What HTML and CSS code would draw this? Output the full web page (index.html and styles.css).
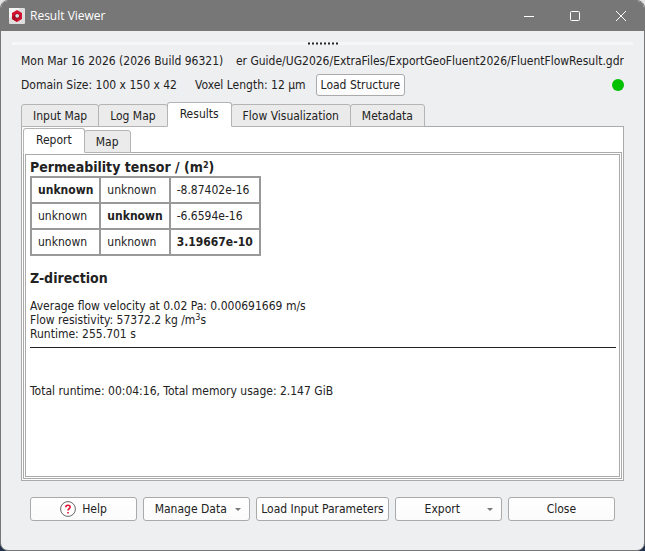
FILE: index.html
```html
<!DOCTYPE html>
<html lang="en">
<head>
<meta charset="utf-8">
<title>Result Viewer</title>
<link rel="stylesheet" href="styles.css">
</head>
<body>
<div class="window">
  <header class="titlebar">
    <svg class="app-icon" viewBox="0 0 16 16" aria-hidden="true">
      <rect width="16" height="16" rx="1" fill="#dedede"/>
      <path d="M0 0H11L0 11Z" fill="#f4f4f4"/>
      <path d="M8 2 13 5V11L8 14 3 11V5Z" fill="#d2122e"/>
      <path d="M3 8 8 8 8 14 3 11Z" fill="#b50d26"/>
      <circle cx="8" cy="8" r="2.6" fill="#8b1020"/>
      <circle cx="8.2" cy="7.8" r="1.9" fill="#d9e3e4"/>
    </svg>
    <h1 class="title">Result Viewer</h1>
    <div class="window-controls">
      <button class="window-control" type="button" aria-label="Minimize"><svg viewBox="0 0 12 12"><path d="M1 6.5H11"/></svg></button>
      <button class="window-control" type="button" aria-label="Maximize"><svg viewBox="0 0 12 12"><rect x="1.5" y="1.5" width="9" height="9" rx="1"/></svg></button>
      <button class="window-control" type="button" aria-label="Close window"><svg viewBox="0 0 12 12"><path d="M1 1 11 11M11 1 1 11"/></svg></button>
    </div>
  </header>
  <div class="splitter">
    <svg class="grip" viewBox="0 0 32 3" aria-hidden="true"><path d="M1 1.5H32" stroke="#222" stroke-width="2" stroke-dasharray="2 2"/></svg>
  </div>
  <main class="content">
    <div class="info-row">
      <span class="build">Mon Mar 16 2026 (2026 Build 96321)</span>
      <span class="path">er Guide/UG2026/ExtraFiles/ExportGeoFluent2026/FluentFlowResult.gdr</span>
    </div>
    <div class="domain-row">
      <span class="domain">Domain Size: 100 x 150 x 42</span>
      <span class="voxel">Voxel Length: 12 µm</span>
      <button class="button button-small" type="button">Load Structure</button>
      <span class="status" role="img" aria-label="Ready"></span>
    </div>
    <div class="tabs tabs-main" role="tablist">
      <button class="tab" role="tab" type="button">Input Map</button>
      <button class="tab" role="tab" type="button">Log Map</button>
      <button class="tab tab-active" role="tab" type="button" aria-selected="true">Results</button>
      <button class="tab" role="tab" type="button">Flow Visualization</button>
      <button class="tab" role="tab" type="button">Metadata</button>
    </div>
    <section class="pane">
      <div class="tabs" role="tablist">
        <button class="tab tab-active" role="tab" type="button" aria-selected="true">Report</button>
        <button class="tab" role="tab" type="button">Map</button>
      </div>
      <div class="inner-pane">
        <article class="report">
          <h2 class="heading">Permeability tensor / (m<sup>2</sup>)</h2>
          <table class="tensor">
            <tr><td><b>unknown</b></td><td>unknown</td><td>-8.87402e-16</td></tr>
            <tr><td>unknown</td><td><b>unknown</b></td><td>-6.6594e-16</td></tr>
            <tr><td>unknown</td><td>unknown</td><td><b>3.19667e-10</b></td></tr>
          </table>
          <h2 class="heading direction">Z-direction</h2>
          <p class="facts">Average flow velocity at 0.02 Pa: 0.000691669 m/s<br>Flow resistivity: 57372.2 kg /m<sup>3</sup>s<br>Runtime: 255.701 s</p>
          <hr class="rule">
          <p class="total">Total runtime: 00:04:16, Total memory usage: 2.147 GiB</p>
        </article>
      </div>
    </section>
    <footer class="actions">
      <button class="button" type="button"><svg class="help-icon" viewBox="0 0 16 16" aria-hidden="true"><circle cx="8" cy="8" r="7.4" fill="#fff" stroke="#666"/><path d="M5.8 6.2C5.8 3.6 10.2 3.6 10.2 6.1 10.2 7.6 8 7.8 8 9.6M8 11V12.6" fill="none" stroke="#e01030" stroke-width="1.6"/></svg>Help</button>
      <button class="button button-menu" type="button">Manage Data</button>
      <button class="button" type="button">Load Input Parameters</button>
      <button class="button button-menu" type="button">Export</button>
      <button class="button" type="button">Close</button>
    </footer>
  </main>
</div>
</body>
</html>
```
FILE: styles.css
```css
* { box-sizing: border-box; }

body {
  margin: 0;
  background: linear-gradient(#e4e4e4 50%, #20304c 50%);
  color: #222;
  font: 12px/14px "DejaVu Sans Condensed", "DejaVu Sans", sans-serif;
}

button {
  margin: 0;
  color: inherit;
  font: inherit;
  white-space: nowrap;
}

.window {
  display: flex;
  flex-direction: column;
  min-height: 100vh;
  overflow: hidden;
  border: 1px solid #777;
  border-radius: 8px;
  background: #eeeff1;
}

.titlebar {
  display: flex;
  align-items: center;
  height: 30px;
  padding-left: 8px;
  background: #777;
  color: #fff;
}

.app-icon { width: 16px; height: 16px; }

.title {
  margin: 0 0 0 5px;
  font: 12px/16px "Open Sans", sans-serif;
}

.window-controls { display: flex; margin-left: auto; }

.window-control {
  display: flex;
  align-items: center;
  justify-content: center;
  width: 46px;
  height: 30px;
  padding: 0;
  border: 0;
  background: none;
}

.window-control svg {
  width: 12px;
  height: 12px;
  fill: none;
  stroke: #fff;
}

.splitter {
  display: flex;
  justify-content: center;
  margin: 11px 11px 0;
  height: 3px;
  background: #f7f7f7;
}

.grip { width: 32px; height: 3px; }

.content {
  display: flex;
  flex: 1;
  flex-direction: column;
  padding: 9px 20px 29px;
}

.info-row { display: flex; gap: 4px; }

.build { white-space: nowrap; }

.path {
  display: flex;
  flex: 1;
  justify-content: flex-end;
  min-width: 0;
  overflow: hidden;
  white-space: nowrap;
}

.domain-row {
  display: flex;
  align-items: center;
  margin-top: 6px;
}

.voxel { margin: 0 10px 0 18px; }

.status {
  width: 12px;
  height: 12px;
  margin-left: auto;
  border-radius: 50%;
  background: #00c000;
}

.button {
  height: 24px;
  padding: 0 4px;
  border: 1px solid #aaa;
  border-radius: 3px;
  background: linear-gradient(#fff, #fbfbfb);
}

.button-small { height: 22px; }

.tabs {
  display: flex;
  align-items: flex-end;
  position: relative;
  height: 25px;
  margin-bottom: -1px;
}

.tab {
  height: 23px;
  margin-right: -1px;
  padding: 1px 11px 0;
  border: 1px solid #b4b4b4;
  border-radius: 3px 3px 0 0;
  background: #ebebeb;
}

.tab-active {
  z-index: 1;
  height: 25px;
  padding: 0 12px 1px;
  border-bottom-color: #fff;
  background: #fff;
}

.tabs-main { margin-top: 6px; }

.pane {
  display: flex;
  flex: 1;
  flex-direction: column;
  padding: 1px;
  border: 1px solid #aaa;
  background: #fff;
}

.inner-pane {
  display: flex;
  flex: 1;
  padding: 1px;
  border: 1px solid #aaa;
}

.report {
  flex: 1;
  padding: 4px;
  border: 1px solid #aaa;
}

.heading {
  margin: 0;
  font-size: 14px;
  line-height: 17px;
}

sup {
  font-size: 9px;
  line-height: 0;
  vertical-align: 4px;
}

.tensor {
  border: 1px solid #808080;
  border-collapse: collapse;
}

.tensor td {
  height: 26px;
  padding: 0 6px;
  border: 2px solid #999;
}

.direction { margin-top: 14px; }

.facts { margin: 12px 0 6px; }

.rule {
  margin: 0 -1px 0 0;
  border: 0;
  border-top: 1px solid #222;
}

.total { margin: 36px 0 0; }

.actions {
  display: grid;
  grid-template-columns: 1fr 1fr auto 1fr 1fr;
  gap: 6px;
  margin-top: 16px;
  padding: 0 9px;
}

.help-icon {
  width: 16px;
  height: 16px;
  margin-right: 6px;
  vertical-align: -4px;
}

.button-menu {
  display: flex;
  align-items: center;
  justify-content: center;
  position: relative;
  padding-right: 16px;
}

.button-menu::after {
  position: absolute;
  right: 8px;
  border: 3px solid transparent;
  border-top-color: #777;
  border-bottom: 0;
  content: "";
}
```
